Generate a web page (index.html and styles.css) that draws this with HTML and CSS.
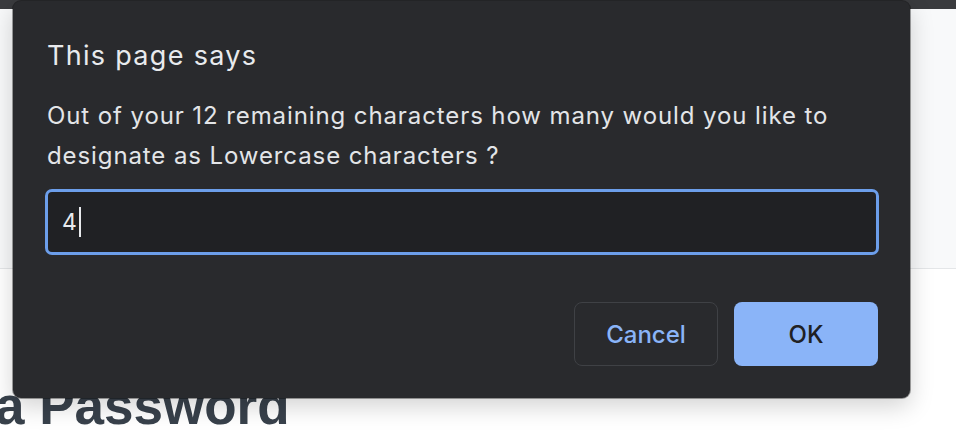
FILE: index.html
```html
<!DOCTYPE html>
<html lang="en">
<head>
<meta charset="utf-8">
<title>Password Generator</title>
<link rel="stylesheet" href="styles.css">
</head>
<body>
  <div class="topbar"></div>
  <header class="hero"></header>
  <main class="content">
    <h1 class="page-title">a Password</h1>
  </main>

  <div class="dialog" role="dialog">
    <div class="dialog-title">This page says</div>
    <div class="dialog-message">Out of your 12 remaining characters how many would you like to designate as Lowercase characters ?</div>
    <div class="dialog-input"><span class="input-value">4</span><span class="caret"></span></div>
    <div class="dialog-actions">
      <button class="btn btn-cancel">Cancel</button>
      <button class="btn btn-ok">OK</button>
    </div>
  </div>
</body>
</html>
```
FILE: styles.css
```css
html, body {
  margin: 0;
  padding: 0;
}
body {
  width: 956px;
  height: 434px;
  overflow: hidden;
  background: #ffffff;
  font-family: Inter, "Noto Sans", sans-serif;
  position: relative;
}
.topbar {
  height: 9px;
  background: #3a3b3e;
}
.hero {
  height: 259px;
  background: #f8f9fa;
  border-bottom: 1px solid #e4e6e8;
}
.content {
  padding-top: 107px;
}
.page-title {
  margin: 0 0 0 -5px;
  font-family: "Liberation Sans", Arial, sans-serif;
  font-weight: 700;
  font-size: 53px;
  line-height: 60px;
  color: #38414b;
  white-space: nowrap;
}

.dialog {
  position: absolute;
  left: 13px;
  top: 1px;
  width: 897px;
  height: 397px;
  box-sizing: border-box;
  padding: 39px 31px 32px 32px;
  background: #292a2d;
  border-radius: 8px;
  box-shadow: 0 8px 24px rgba(0, 0, 0, 0.18), 0 0 0 1px rgba(0, 0, 0, 0.35);
  color: #e8eaed;
  display: flex;
  flex-direction: column;
}
.dialog-title {
  font-size: 27px;
  line-height: 32px;
  letter-spacing: 1.3px;
  padding-left: 2px;
  color: #e8eaed;
}
.dialog-message {
  margin-top: 24px;
  font-size: 24px;
  line-height: 40px;
  letter-spacing: 0.9px;
  padding-left: 2px;
  color: #e3e5e8;
}
.dialog-input {
  margin-top: 13px;
  height: 66px;
  box-sizing: border-box;
  border: 3px solid #6c9eea;
  border-radius: 7px;
  background: #202124;
  display: flex;
  align-items: center;
  padding-left: 14px;
  font-size: 23px;
  color: #e8eaed;
}
.caret {
  display: inline-block;
  width: 2px;
  height: 30px;
  margin-left: 2px;
  background: #e8eaed;
}
.dialog-actions {
  margin-top: 47px;
  display: flex;
  justify-content: flex-end;
  gap: 16px;
  padding-right: 1px;
}
.btn {
  width: 144px;
  height: 64px;
  box-sizing: border-box;
  border-radius: 8px;
  font-family: Inter, "Noto Sans", sans-serif;
  font-size: 24px;
  font-weight: 500;
  cursor: pointer;
}
.btn-cancel {
  background: transparent;
  border: 1px solid #3f4145;
  color: #8ab4f8;
}
.btn-ok {
  background: #8ab4f8;
  border: none;
  color: #202124;
}
```
